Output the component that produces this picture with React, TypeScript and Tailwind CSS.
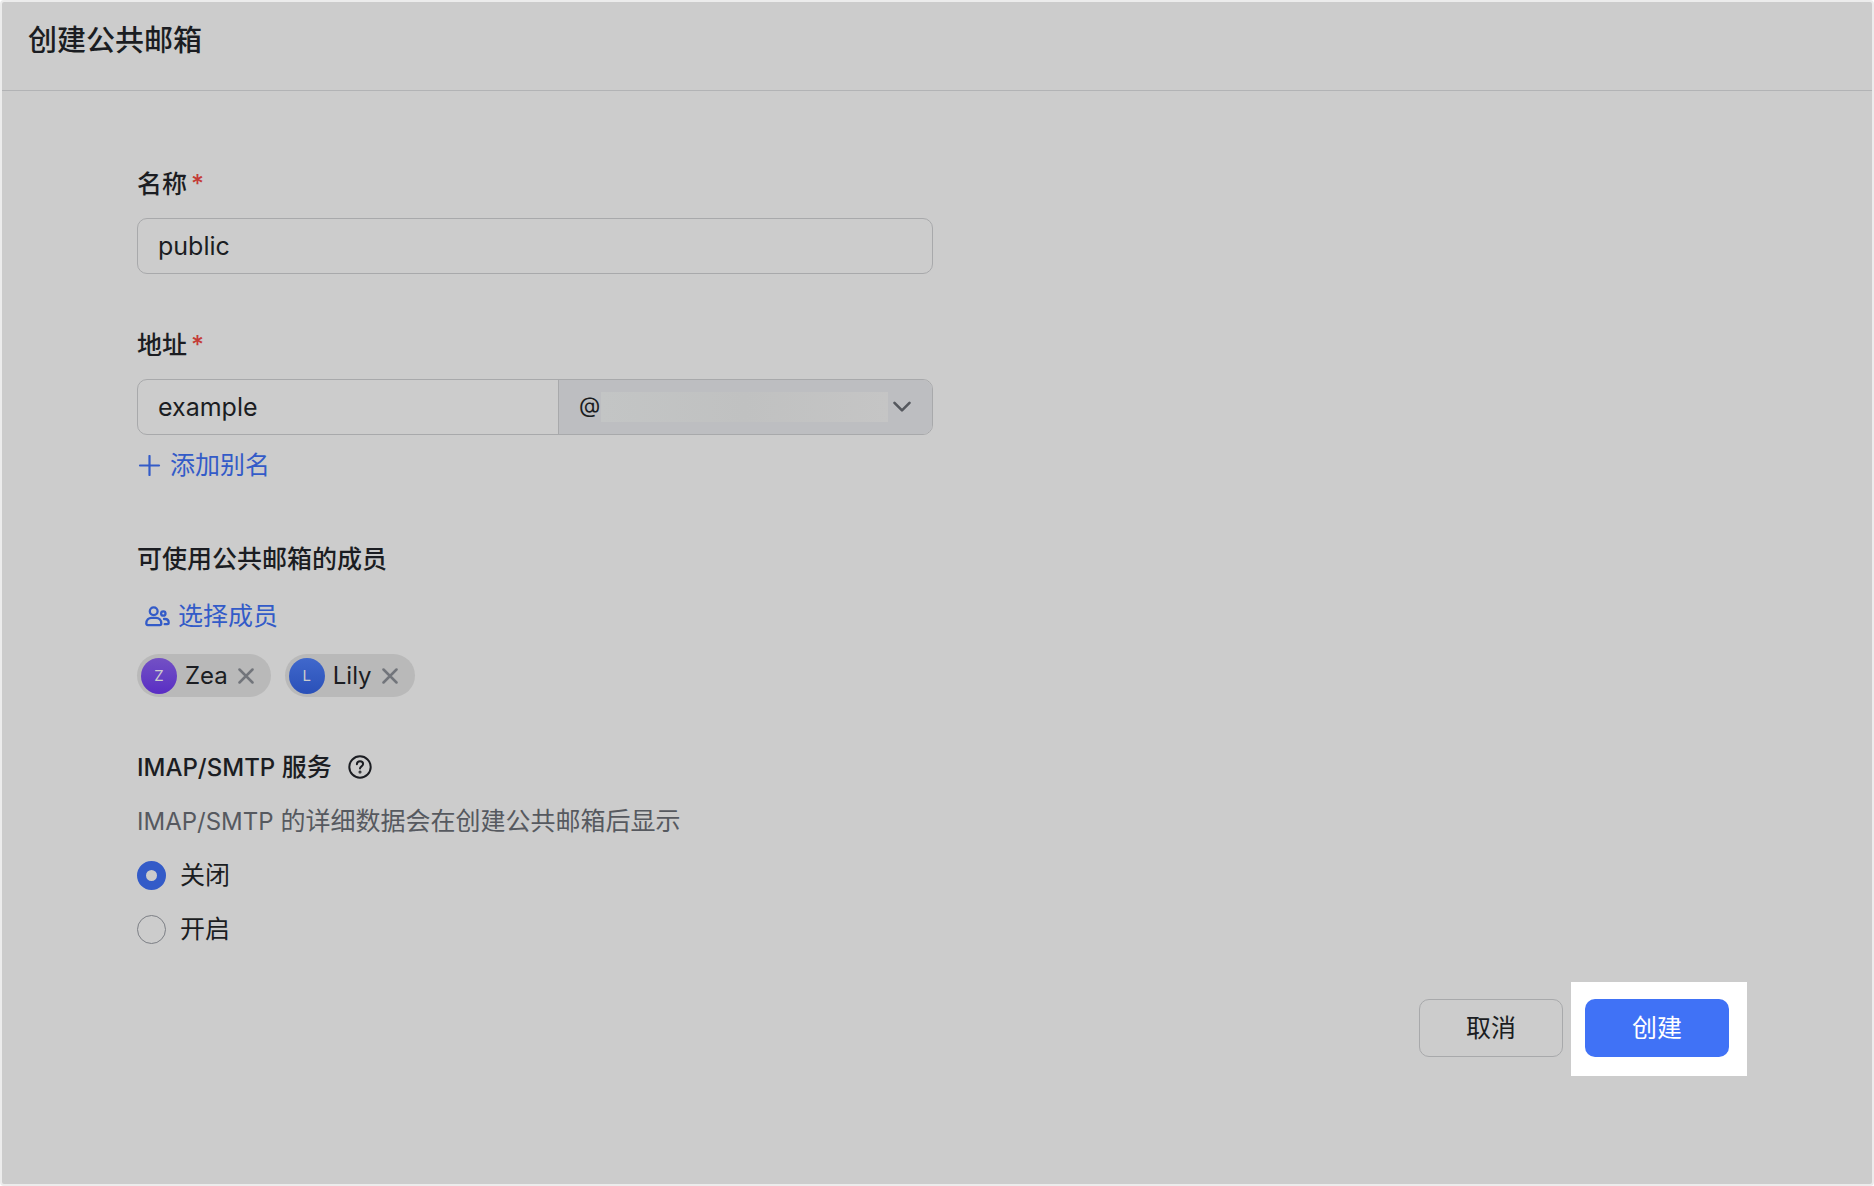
import React, { useState } from 'react';

interface Member {
  id: string;
  name: string;
  avatar: string;
}

const initialMembers: Member[] = [
  { id: 'zea', name: 'Zea', avatar: 'bg-linear-to-b from-[#7350c4] to-[#5a2cc4]' },
  { id: 'lily', name: 'Lily', avatar: 'bg-linear-to-b from-[#4068cc] to-[#2a50b8]' }
];

const services = [
  { id: 'off', label: '关闭' },
  { id: 'on', label: '开启' }
];

const PlusIcon = () => (
  <svg width="25" height="21" viewBox="0 0 25 21" fill="none" stroke="currentColor" strokeWidth="2.2" strokeLinecap="round" aria-hidden="true">
    <path d="M12.5 1v19M3 10.5h19" />
  </svg>
);

const MembersIcon = () => (
  <svg width="25" height="21" viewBox="0 0 25 21" fill="none" stroke="currentColor" strokeWidth="2.3" strokeLinecap="round" strokeLinejoin="round" aria-hidden="true">
    <circle cx="8.7" cy="5.2" r="3.9" />
    <path d="M1.3 17.6c0-3.6 2.3-5.8 5.3-5.8h4.4c3 0 5.3 2.2 5.3 5.8 0 .9-.6 1.5-1.5 1.5h-12c-.9 0-1.5-.6-1.5-1.5z" />
    <circle cx="18.3" cy="7.5" r="2.2" />
    <path d="M19 13h1c2.2 0 3.7 1.5 3.7 3.9 0 .8-.5 1.3-1.3 1.3h-2.7" />
  </svg>
);

const CloseIcon = () => (
  <svg width="16" height="16" viewBox="0 0 16 16" fill="none" stroke="currentColor" strokeWidth="2.5" strokeLinecap="round" aria-hidden="true">
    <path d="M1.5 1.5l13 13M14.5 1.5l-13 13" />
  </svg>
);

const HelpIcon = () => (
  <svg width="24" height="24" viewBox="0 0 24 24" fill="none" stroke="currentColor" strokeWidth="2" strokeLinecap="round" strokeLinejoin="round" aria-hidden="true">
    <circle cx="12" cy="12" r="10.7" />
    <path d="M8.9 9.3c.1-1.9 1.4-3 3.1-3s3.1 1.1 3.1 2.8c0 2.3-3.1 2.3-3.1 4.5" />
    <circle cx="12" cy="17" r=".5" />
  </svg>
);

const Required = () => <span className="ml-1 text-[#c43b37]">*</span>;

const App = () => {
  const [name, setName] = useState('public');
  const [address, setAddress] = useState('example');
  const [members, setMembers] = useState(initialMembers);
  const [service, setService] = useState('off');

  return (
    <div className="min-h-screen rounded border-2 border-[#ececec] bg-[#cccccc] font-['Inter','Noto_Sans_CJK_SC',sans-serif] text-[25px] leading-9 text-[#1b1d22]">
      <header className="border-b border-[#b2b3b5] px-[26px] pt-[21px] pb-[31px]">
        <h1 className="text-[29px] leading-9 font-medium">创建公共邮箱</h1>
      </header>

      <form className="pt-[75px] pr-[125px] pl-[135px]" onSubmit={(e) => e.preventDefault()}>
        <div className="max-w-[796px]">
          <label htmlFor="name" className="block font-medium">
            名称<Required />
          </label>
          <input
            id="name"
            value={name}
            onChange={(e) => setName(e.target.value)}
            className="mt-4 block h-14 w-full rounded-[10px] border border-[#a8a9ab] px-5 outline-none"
          />
        </div>

        <div className="mt-[53px] max-w-[796px]">
          <label htmlFor="address" className="block font-medium">
            地址<Required />
          </label>
          <div className="mt-4 flex h-14 overflow-hidden rounded-[10px] border border-[#a8a9ab]">
            <input
              id="address"
              value={address}
              onChange={(e) => setAddress(e.target.value)}
              className="min-w-0 flex-1 px-5 outline-none"
            />
            <div className="relative w-[374px] border-l border-[#a8a9ab] bg-[#bdbec1]">
              <select aria-label="域名" className="h-full w-full appearance-none px-5 pb-1 text-[22px] outline-none">
                <option>@</option>
              </select>
              {/* Hidden domain name */}
              <span className="pointer-events-none absolute inset-y-3 right-11 left-[42px] bg-linear-to-r from-[#c3c5c5] via-[#c0c1c1] to-[#c5c5c5]" />
              <svg className="pointer-events-none absolute top-[21px] right-[21px]" width="18" height="12" viewBox="0 0 18 12" fill="none" stroke="#55585e" strokeWidth="2.6" strokeLinecap="round" strokeLinejoin="round" aria-hidden="true">
                <path d="M1.5 1.8L9 9.300l7.5-7.500" />
              </svg>
            </div>
          </div>
          <button type="button" className="mt-3 flex items-center gap-2 text-[#335bc8]">
            <PlusIcon />
            添加别名
          </button>
        </div>

        <div className="mt-[58px]">
          <h2 className="font-medium">可使用公共邮箱的成员</h2>
          <button type="button" className="mt-[21px] ml-2 flex items-center gap-2 text-[#335bc8]">
            <MembersIcon />
            选择成员
          </button>
          <ul className="mt-5 flex gap-[14px]">
            {members.map((member) => (
              <li key={member.id} className="flex h-[43px] items-center rounded-full bg-[#b9b9b9] pr-[17px] pl-1">
                <span className={`flex size-9 items-center justify-center rounded-full text-[15px] text-[#cccccc] ${member.avatar}`}>
                  {member.name[0]}
                </span>
                <span className="ml-2 text-[24px]">{member.name}</span>
                <button
                  type="button"
                  aria-label={`移除 ${member.name}`}
                  className="ml-[10px] text-[#72757b]"
                  onClick={() => setMembers(members.filter((m) => m.id !== member.id))}
                >
                  <CloseIcon />
                </button>
              </li>
            ))}
          </ul>
        </div>

        <fieldset className="mt-[52px]">
          <legend className="flex items-center gap-4 font-medium">
            <span>
              <span className="text-[24px] leading-none">IMAP/SMTP</span> 服务
            </span>
            <HelpIcon />
          </legend>
          <p className="mt-[18px] text-[#56595f]">
            <span className="text-[24px] leading-none">IMAP/SMTP</span> 的详细数据会在创建公共邮箱后显示
          </p>
          {services.map((item) => (
            <label key={item.id} className="mt-[18px] flex w-fit items-center gap-[14px]">
              <input
                type="radio"
                name="service"
                checked={service === item.id}
                onChange={() => setService(item.id)}
                className="size-[29px] appearance-none rounded-full border border-[#7c7f85] checked:border-[9px] checked:border-[#335bc8]"
              />
              {item.label}
            </label>
          ))}
        </fieldset>

        <div className="mt-[35px] flex items-baseline justify-end gap-2">
          <button type="button" className="h-[58px] w-36 rounded-[10px] border border-[#a8a9ab]">
            取消
          </button>
          <div className="bg-white pt-[17px] pr-[18px] pb-[19px] pl-[14px]">
            <button type="submit" className="h-[58px] w-36 rounded-[10px] bg-[#4072f6] text-white">
              创建
            </button>
          </div>
        </div>
      </form>
    </div>
  );
};

export default App;
